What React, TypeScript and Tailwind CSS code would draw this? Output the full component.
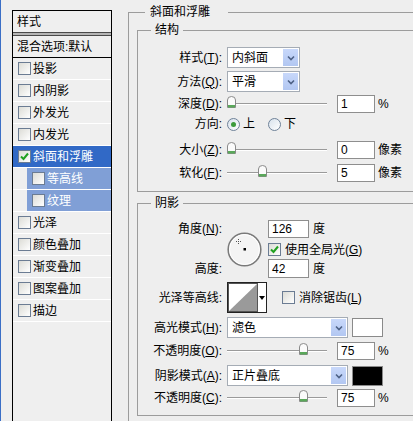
import React from 'react';

type Kids = { children?: React.ReactNode };

function Check({ checked = false }: { checked?: boolean }) {
    return (
        <span className="w-[13px] h-[13px] shrink-0 border border-[#6b7c93] bg-gradient-to-br from-[#dcdcd6] to-white flex items-center justify-center">
            {checked && (
                <svg width="9" height="9" viewBox="0 0 9 9">
                    <path d="M1 4.5 L3.5 7 L8 1.5" fill="none" stroke="#21a121" strokeWidth="2" />
                </svg>
            )}
        </span>
    );
}

function Radio({ checked = false }: { checked?: boolean }) {
    return (
        <span className="w-[13px] h-[13px] shrink-0 rounded-full border border-[#6f8299] bg-gradient-to-br from-[#d8e2ec] to-white flex items-center justify-center">
            {checked && <span className="w-[5px] h-[5px] rounded-full bg-[#3c9b3c]" />}
        </span>
    );
}

function Label({ children }: Kids) {
    return <span className="w-[84px] shrink-0 text-right whitespace-nowrap">{children}</span>;
}

function Select({ value, wide = false }: { value: string; wide?: boolean }) {
    return (
        <div className={`${wide ? 'w-[121px]' : 'w-[73px]'} h-[21px] ml-[5px] border border-[#a5acb5] bg-white flex`}>
            <span className="flex-1 pl-[4px] flex items-center">{value}</span>
            <span className="w-[15px] m-px bg-gradient-to-b from-[#c8d8fa] to-[#b2c7f2] flex items-center justify-center">
                <svg width="8" height="6" viewBox="0 0 8 6">
                    <path d="M1 1.5 L4 4.5 L7 1.5" fill="none" stroke="#4d6185" strokeWidth="1.6" />
                </svg>
            </span>
        </div>
    );
}

function NumBox({ value, className = 'w-[38px]' }: { value: string; className?: string }) {
    return (
        <span className={`${className} h-full border border-[#8e8e8e] bg-white pl-[3px] flex items-center`}>{value}</span>
    );
}

function Thumb() {
    return (
        <svg width="9" height="12" viewBox="0 0 9 12">
            <path d="M0.5 4 Q0.5 0.5 4.5 0.5 Q8.5 0.5 8.5 4 V11.5 H0.5 Z" fill="#fbfbfb" stroke="#8a8a8a" />
            <rect x="1" y="9" width="7" height="2.5" fill="#5aa85a" />
        </svg>
    );
}

function Slider({ pos }: { pos: number }) {
    return (
        <div className="relative w-[100px] h-full ml-[5px] flex items-center">
            <div className="w-full h-[2px] border-t border-[#9a9a9a] border-b border-b-white" />
            <div className="absolute top-[1px]" style={{ left: pos }}>
                <Thumb />
            </div>
        </div>
    );
}

function Group({ title, children, className = '' }: Kids & { title: string; className?: string }) {
    return (
        <fieldset className={`border-t border-l border-b border-[#9c9c9c] ${className}`}>
            <legend className="ml-[13px] px-[4px] leading-[16px]">{title}</legend>
            {children}
        </fieldset>
    );
}

const layers = ['投影', '内阴影', '外发光', '内发光'];
const layers2 = ['光泽', '颜色叠加', '渐变叠加', '图案叠加', '描边'];

export default function App() {
    return (
        <div className="w-[413px] h-[421px] overflow-hidden bg-[#eeeeee] flex text-[12px] leading-[16px] text-black font-['Liberation_Sans','Noto_Sans_CJK_SC',sans-serif]">
            <div className="w-px shrink-0 bg-[#3a6ec6]" />

            {/* Styles list */}
            <div className="pl-[11px] pt-[10px] shrink-0">
                <div className="w-[100px] h-[420px] border border-black bg-[#efefef] flex flex-col">
                    <div className="h-[21px] pl-[4px] flex items-center">样式</div>
                    <div className="h-[4px] border-y border-[#4a4a4a] bg-[#b5b5b5]" />
                    <div className="h-[22px] pl-[4px] flex items-center border-b border-black whitespace-nowrap">混合选项:默认</div>
                    {layers.map((l) => (
                        <div key={l} className="h-[22px] pl-[5px] flex items-center gap-[2px] border-b border-white">
                            <Check />
                            <span>{l}</span>
                        </div>
                    ))}
                    <div className="h-[22px] pl-[5px] flex items-center gap-[2px] border-b border-white bg-[#3169c6] text-white">
                        <Check checked />
                        <span>斜面和浮雕</span>
                    </div>
                    {['等高线', '纹理'].map((l) => (
                        <div key={l} className="h-[22px] pl-[14px] flex border-b border-white">
                            <div className="flex-1 pl-[5px] flex items-center gap-[2px] bg-[#809fd6] text-white">
                                <Check />
                                <span>{l}</span>
                            </div>
                        </div>
                    ))}
                    {layers2.map((l) => (
                        <div key={l} className="h-[22px] pl-[5px] flex items-center gap-[2px] border-b border-white">
                            <Check />
                            <span>{l}</span>
                        </div>
                    ))}
                </div>
            </div>

            {/* Bevel and emboss settings */}
            <fieldset className="ml-[16px] mt-[4px] w-[300px] shrink-0 border-t border-l border-[#9c9c9c] pl-[8px]">
                <legend className="ml-[8px] pl-[5px] pr-[18px] leading-[16px]">斜面和浮雕</legend>

                <Group title="结构" className="mt-[2px] pt-[9px] pb-[9px]">
                    <div className="h-[21px] flex items-center">
                        <Label>样式(<u>T</u>):</Label>
                        <Select value="内斜面" />
                    </div>
                    <div className="h-[21px] mt-[3px] flex items-center">
                        <Label>方法(<u>Q</u>):</Label>
                        <Select value="平滑" />
                    </div>
                    <div className="h-[18px] mt-[3px] flex items-center">
                        <Label>深度(<u>D</u>):</Label>
                        <Slider pos={0} />
                        <span className="ml-[10px] h-full flex"><NumBox value="1" /></span>
                        <span className="ml-[3px]">%</span>
                    </div>
                    <div className="h-[16px] mt-[3px] flex items-center">
                        <Label>方向:</Label>
                        <span className="ml-[5px] flex items-center gap-[3px]">
                            <Radio checked />
                            <span>上</span>
                        </span>
                        <span className="ml-[13px] flex items-center gap-[3px]">
                            <Radio />
                            <span>下</span>
                        </span>
                    </div>
                    <div className="h-[18px] mt-[9px] flex items-center">
                        <Label>大小(<u>Z</u>):</Label>
                        <Slider pos={0} />
                        <span className="ml-[10px] h-full flex"><NumBox value="0" /></span>
                        <span className="ml-[3px]">像素</span>
                    </div>
                    <div className="h-[18px] mt-[5px] flex items-center">
                        <Label>软化(<u>F</u>):</Label>
                        <Slider pos={31} />
                        <span className="ml-[10px] h-full flex"><NumBox value="5" /></span>
                        <span className="ml-[3px]">像素</span>
                    </div>
                </Group>

                <Group title="阴影" className="mt-[3px] pt-[9px] pb-[8px]">
                    <div className="flex items-center">
                        <div className="w-[84px] h-[58px] shrink-0 flex flex-col justify-between text-right">
                            <span className="h-[18px] flex items-center justify-end">角度(<u>N</u>):</span>
                            <span className="h-[19px] flex items-center justify-end">高度:</span>
                        </div>
                        <svg className="ml-[5px]" width="35" height="35" viewBox="0 0 35 35">
                            <circle cx="17.5" cy="17.5" r="16.3" fill="#f4f4f4" stroke="#7a7a7a" strokeWidth="1.6" />
                            <circle cx="17.5" cy="17.5" r="15" fill="none" stroke="#ffffff" strokeWidth="1" />
                            <path d="M11.5 7 V12 M9 9.5 H14" stroke="#555" strokeWidth="1" strokeDasharray="1 1" />
                            <rect x="16.5" y="16" width="2.5" height="2.5" fill="#000" />
                        </svg>
                        <div className="ml-[6px] flex flex-col">
                            <div className="h-[18px] flex items-center">
                                <span className="h-full flex"><NumBox value="126" className="w-[41px]" /></span>
                                <span className="ml-[4px]">度</span>
                            </div>
                            <div className="h-[13px] mt-[5px] flex items-center gap-[4px] whitespace-nowrap">
                                <Check checked />
                                <span>使用全局光(<u>G</u>)</span>
                            </div>
                            <div className="h-[19px] mt-[3px] flex items-center">
                                <span className="h-full flex"><NumBox value="42" className="w-[41px]" /></span>
                                <span className="ml-[4px]">度</span>
                            </div>
                        </div>
                    </div>

                    <div className="h-[31px] mt-[4px] flex items-center">
                        <Label>光泽等高线:</Label>
                        <div className="ml-[5px] w-[40px] h-[31px] border border-[#222] bg-white flex">
                            <svg width="30" height="29" viewBox="0 0 30 29">
                                <rect x="0.5" y="0.5" width="29" height="28" fill="#fff" stroke="#555" />
                                <path d="M1 28 L29 1 V28 Z" fill="#9a9a9a" />
                            </svg>
                            <span className="flex-1 flex items-center justify-center">
                                <svg width="6" height="4" viewBox="0 0 6 4">
                                    <path d="M0 0 H6 L3 4 Z" fill="#000" />
                                </svg>
                            </span>
                        </div>
                        <span className="ml-[15px] flex items-center gap-[4px] whitespace-nowrap">
                            <Check />
                            <span>消除锯齿(<u>L</u>)</span>
                        </span>
                    </div>

                    <div className="h-[21px] mt-[4px] flex items-center">
                        <Label>高光模式(<u>H</u>):</Label>
                        <Select value="滤色" wide />
                        <span className="ml-[4px] w-[31px] h-[19px] border border-[#8a8a8a] bg-white" />
                    </div>
                    <div className="h-[18px] mt-[4px] flex items-center">
                        <Label>不透明度(<u>O</u>):</Label>
                        <Slider pos={72} />
                        <span className="ml-[10px] h-full flex"><NumBox value="75" /></span>
                        <span className="ml-[3px]">%</span>
                    </div>
                    <div className="h-[21px] mt-[5px] flex items-center">
                        <Label>阴影模式(<u>A</u>):</Label>
                        <Select value="正片叠底" wide />
                        <span className="ml-[4px] w-[31px] h-[20px] border border-[#8a8a8a] bg-black" />
                    </div>
                    <div className="h-[18px] mt-[3px] flex items-center">
                        <Label>不透明度(<u>C</u>):</Label>
                        <Slider pos={72} />
                        <span className="ml-[10px] h-full flex"><NumBox value="75" /></span>
                        <span className="ml-[3px]">%</span>
                    </div>
                </Group>
            </fieldset>
        </div>
    );
}
